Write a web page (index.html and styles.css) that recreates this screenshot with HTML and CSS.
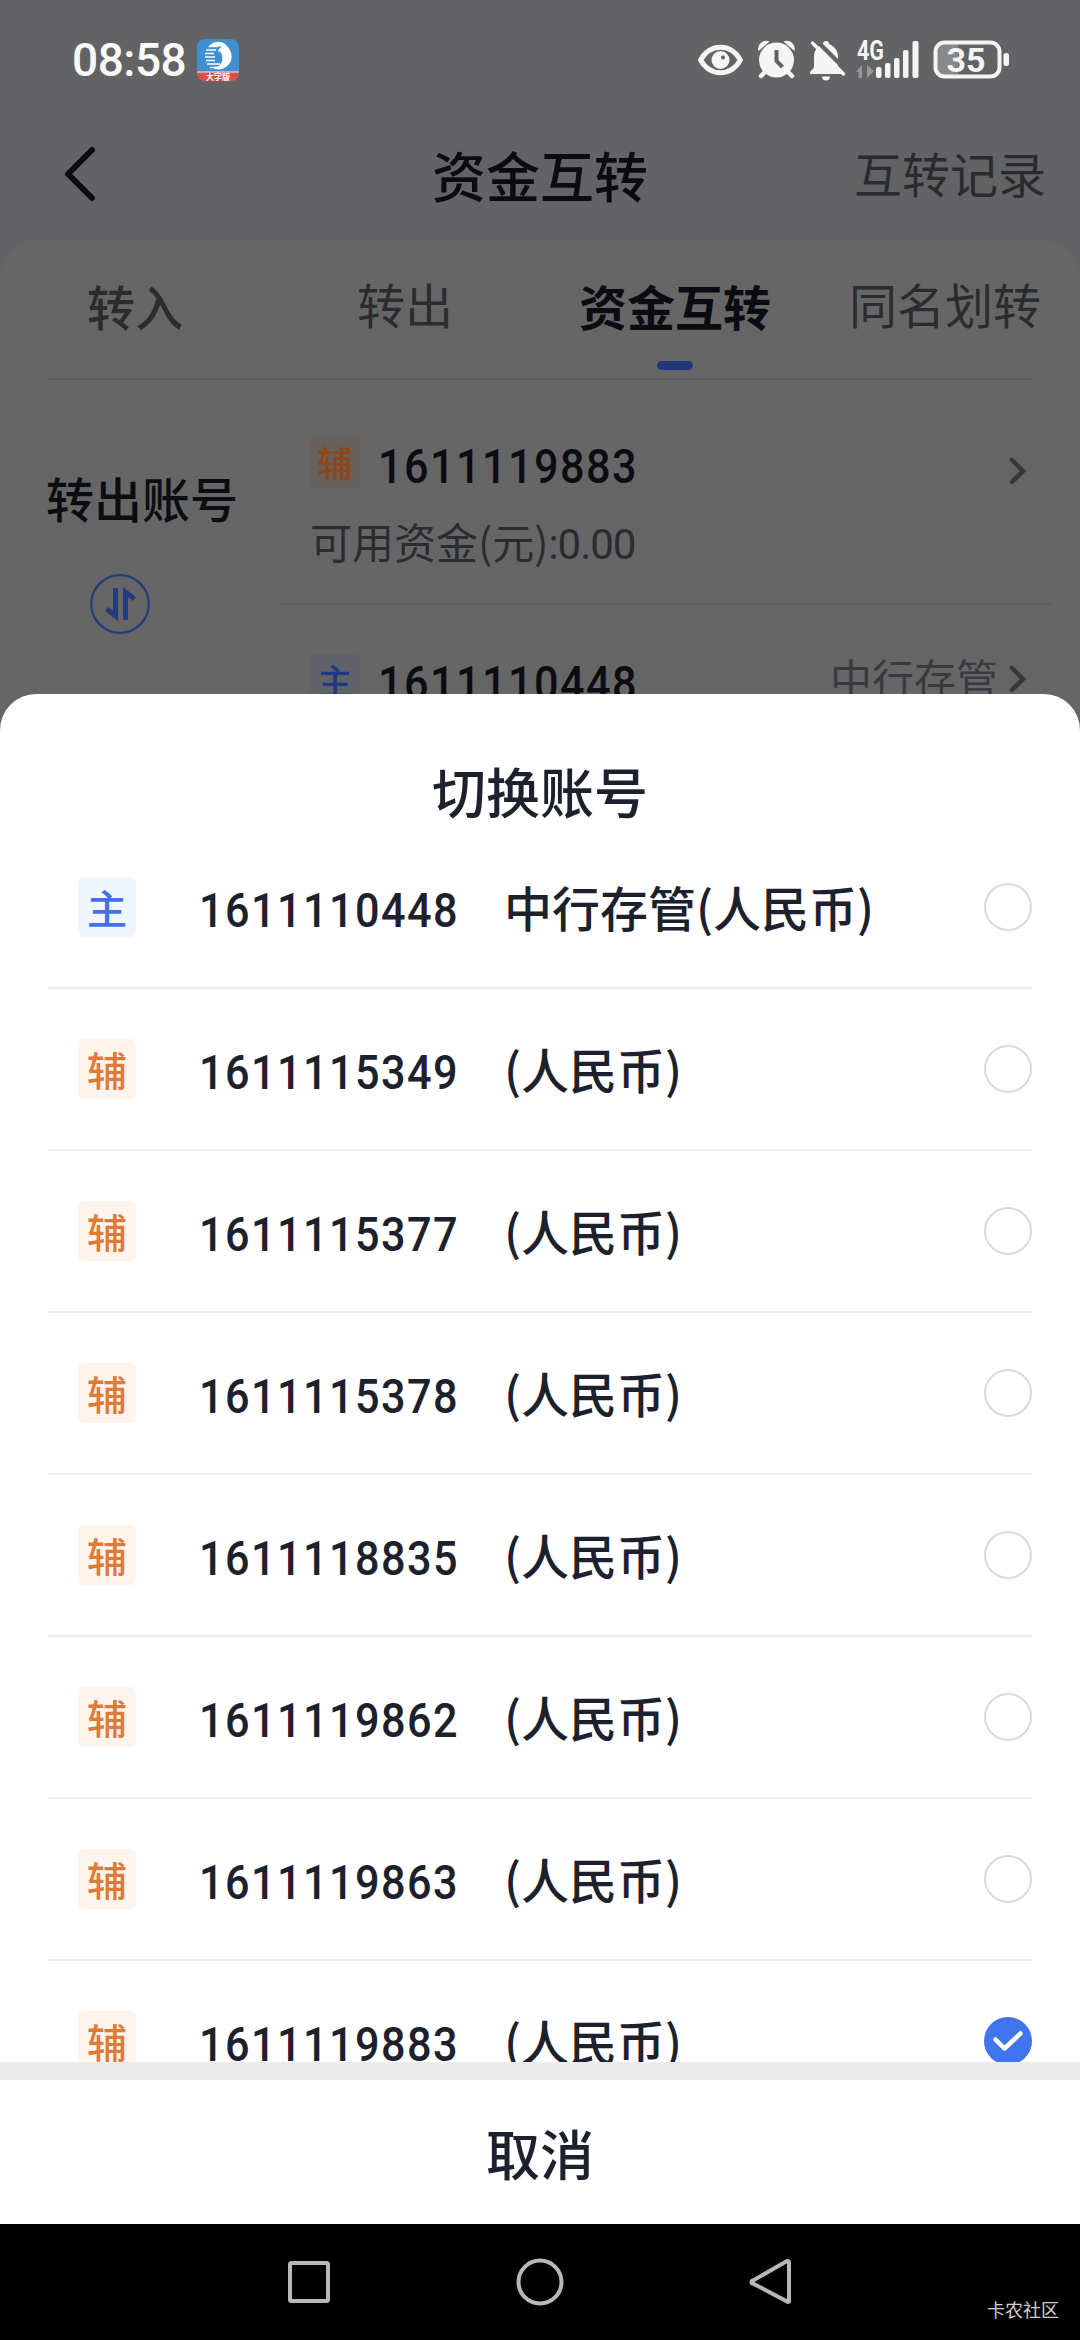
FILE: index.html
```html
<!DOCTYPE html>
<html lang="zh-CN">
<head>
<meta charset="utf-8">
<title>资金互转</title>
<link rel="stylesheet" href="styles.css">
</head>
<body>
<div class="screen">
  <div class="page">
    <div class="statusbar">
      <span class="clock">08:58</span>
      <svg class="app" width="42" height="42" viewBox="0 0 42 42">
        <defs><clipPath id="app-clip"><rect width="42" height="42" rx="8"/></clipPath></defs>
        <g clip-path="url(#app-clip)">
          <rect width="42" height="42" fill="#3f8fd2"/>
          <rect y="33" width="42" height="9" fill="#d9504a"/>
          <path d="M0 33h42" stroke="#e8eef5" stroke-width="1.200"/>
          <path d="M11 8C16 2 24 1 29 6c7 6 8 17 0 22-4 3-9 3-13 1 5-1 8-3 9-7 1-5 0-9-4-10 0 0 1-3 4-4-5-1-9 0-14 0z" fill="#fff"/>
          <path d="M12 7.500h9M9 11h10M8 14.500h9M8 18h10M9 21.500h9M10 25h13M13 28.500h10" stroke="#fff" stroke-width="1.400"/>
        </g>
        <text class="app-label" x="21" y="41" text-anchor="middle">大字版</text>
      </svg>
      <svg class="status-icons" width="316" height="44" viewBox="696 38 316 44" fill="#f5f5f5">
        <path d="M700.500 60c10-17 30-17 40 0c-10 17-30 17-40 0z" fill="none" stroke="#f5f5f5" stroke-width="5" stroke-linejoin="round"/>
        <circle cx="720.500" cy="60" r="9"/><circle cx="723" cy="57.500" r="2" fill="#636365"/>
        <circle cx="776.500" cy="60" r="17.500"/>
        <path d="M758.500 51a8 8 0 0 1 11-9.500zM794.500 51a8 8 0 0 0-11-9.500z"/>
        <path d="M766 71l-5 5M787 71l5 5" stroke="#f5f5f5" stroke-width="4.500" stroke-linecap="round"/>
        <path d="M776.500 50v11l6 6" fill="none" stroke="#636365" stroke-width="4"/>
        <path d="M810 74c0-5 4-4 4-8V57c0-8 5-12 9-13a3 3 0 0 1 6 0c5 2 9 6 9 13v9c0 4 4 3 4 8z"/>
        <path d="M822 76.500h8a4 4 0 0 1-8 0z"/>
        <path d="M815.500 39.500l32 32" stroke="#636365" stroke-width="4.500"/>
        <path d="M812.500 43l31 31" stroke="#f5f5f5" stroke-width="3.500" stroke-linecap="round"/>
        <text class="net" x="857" y="59.500" textLength="27" lengthAdjust="spacingAndGlyphs">4G</text>
        <path d="M862 65v13h-3.500v-6h-2.500zM867 65v13l7-7z" fill="#98989a"/>
        <rect x="876" y="67" width="5.500" height="11" rx="2"/>
        <rect x="885" y="63" width="5.500" height="15" rx="2"/>
        <rect x="894" y="58" width="5.500" height="20" rx="2"/>
        <rect x="903" y="50" width="5.500" height="28" rx="2"/>
        <rect x="912.500" y="41" width="6" height="37" rx="2"/>
        <path d="M946 43h12v34h-12a9 9 0 0 1-9-9V52a9 9 0 0 1 9-9z" fill="#88888a"/>
        <rect x="935.500" y="42.500" width="64" height="34" rx="9" fill="none" stroke="#f5f5f5" stroke-width="4"/>
        <rect x="1003.500" y="53" width="5.500" height="13" rx="2.500"/>
        <text class="pct" x="966" y="72" text-anchor="middle">35</text>
      </svg>
    </div>
    <div class="header">
      <svg class="back" width="36" height="60" viewBox="0 0 36 60"><path d="M32 6L8 30l24 24" fill="none" stroke="#0c0d10" stroke-width="6" stroke-linecap="round" stroke-linejoin="round"/></svg>
      <span class="title">资金互转</span>
      <span class="records">互转记录</span>
    </div>
    <div class="card">
      <div class="tabs">
        <span class="tab near">转入</span>
        <span class="tab">转出</span>
        <span class="tab active">资金互转</span>
        <span class="tab">同名划转</span>
      </div>
      <div class="transfer">
        <div class="side">
          <span class="side-label">转出账号</span>
          <svg class="swap" width="60" height="60" viewBox="0 0 60 60" fill="none" stroke="#233c7c">
            <circle cx="30" cy="30" r="28.800" stroke-width="2.200"/>
            <path d="M25.500 14v28l-9-7M35.500 46V18l9 7" stroke-width="5"/>
          </svg>
          <span class="side-label second">转入账号</span>
        </div>
        <div class="accounts">
          <div class="account out">
            <div class="line">
              <span class="mini aux">辅</span>
              <span class="num dim">1611119883</span>
              <svg class="chev low" width="20" height="32" viewBox="0 0 20 32"><path d="M4 5l11 11L4 27" fill="none" stroke="#36373b" stroke-width="4.500" stroke-linecap="round"/></svg>
            </div>
            <div class="funds">可用资金(元)<span class="amount">:0.00</span></div>
          </div>
          <div class="account in">
            <div class="line">
              <span class="mini main">主</span>
              <span class="num dim">1611110448</span>
              <span class="bank">中行存管</span>
              <svg class="chev" width="20" height="32" viewBox="0 0 20 32"><path d="M4 5l11 11L4 27" fill="none" stroke="#36373b" stroke-width="4.500" stroke-linecap="round"/></svg>
            </div>
          </div>
        </div>
      </div>
    </div>
  </div>

  <div class="sheet">
    <div class="sheet-title">切换账号</div>
    <div class="list">
      <div class="row"><span class="badge main">主</span><span class="num">1611110448</span><span class="name">中行存管(人民币)</span><i class="radio"></i></div>
      <div class="row"><span class="badge">辅</span><span class="num">1611115349</span><span class="name">(人民币)</span><i class="radio"></i></div>
      <div class="row"><span class="badge">辅</span><span class="num">1611115377</span><span class="name">(人民币)</span><i class="radio"></i></div>
      <div class="row"><span class="badge">辅</span><span class="num">1611115378</span><span class="name">(人民币)</span><i class="radio"></i></div>
      <div class="row"><span class="badge">辅</span><span class="num">1611118835</span><span class="name">(人民币)</span><i class="radio"></i></div>
      <div class="row"><span class="badge">辅</span><span class="num">1611119862</span><span class="name">(人民币)</span><i class="radio"></i></div>
      <div class="row"><span class="badge">辅</span><span class="num">1611119863</span><span class="name">(人民币)</span><i class="radio"></i></div>
      <div class="row"><span class="badge">辅</span><span class="num">1611119883</span><span class="name">(人民币)</span>
        <svg class="check" width="48" height="48" viewBox="0 0 48 48"><circle cx="24" cy="24" r="24" fill="#4174ef"/><path d="M11.500 22.500l9 9 16-15" fill="none" stroke="#fff" stroke-width="4.500" stroke-linecap="round" stroke-linejoin="round"/></svg>
      </div>
    </div>
    <div class="cancel">取消</div>
  </div>

  <div class="navbar">
    <svg width="48" height="48" viewBox="0 0 48 48"><rect x="5" y="5" width="38" height="38" rx="1.500"/></svg>
    <svg width="48" height="48" viewBox="0 0 48 48"><circle cx="24" cy="24" r="21.500"/></svg>
    <svg width="48" height="48" viewBox="0 0 48 48"><path d="M42 4.500v39a1.500 1.500 0 0 1-2 0L6 25.500a1.500 1.500 0 0 1 0-3L40 3a1.500 1.500 0 0 1 2 1.500z"/></svg>
    <span class="mark">卡农社区</span>
  </div>
</div>
</body>
</html>
```
FILE: styles.css
```css
* { box-sizing: border-box; }
body { margin: 0; font-family: "Noto Sans CJK SC", sans-serif; }

.screen {
  position: relative;
  display: flex;
  flex-direction: column;
  width: 1080px;
  height: 2340px;
  overflow: hidden;
  background: #636365;
}
svg { display: block; flex: none; overflow: visible; }

/* page behind the sheet */
.page { height: 694px; background: #636365; }
.statusbar {
  display: flex;
  align-items: center;
  height: 120px;
  padding: 0 68px 0 72px;
}
.clock {
  width: 125px;
  font: 500 46px/60px Roboto, sans-serif;
  letter-spacing: -0.5px;
  color: #fafafa;
}
.app-label { font: 700 8px "Noto Sans CJK SC", sans-serif; fill: #fff; }
.status-icons { margin-left: auto; }
.net { font: 700 27px Roboto, sans-serif; }
.pct { font: 700 34px Roboto, sans-serif; }

.header {
  display: grid;
  grid-template-columns: 1fr auto 1fr;
  align-items: center;
  height: 120px;
  padding: 0 34px 12px 34px;
}
.back { margin-left: 26px; }
.title { padding-top: 2px; font-size: 54px; line-height: 80px; font-weight: 500; color: #0b0c10; }
.records { justify-self: end; padding-bottom: 5px; font-size: 48px; line-height: 72px; color: #2a2b2f; }

.card {
  height: 500px;
  border-radius: 36px 36px 0 0;
  background: #666;
}
.tabs {
  position: relative;
  display: grid;
  grid-template-columns: repeat(4, 270px);
  height: 138px;
}
.tabs::after {
  content: "";
  position: absolute;
  left: 48px;
  right: 48px;
  bottom: -2px;
  height: 2px;
  background: #5e5e60;
}
.tab {
  position: relative;
  padding-top: 27px;
  text-align: center;
  font-size: 48px;
  line-height: 72px;
  color: #2b2c30;
}
.tab.near { font-weight: 500; padding-top: 29px; }
.tab.active { font-weight: 700; padding-top: 29px; color: #0b0c12; }
.tab.active::after {
  content: "";
  position: absolute;
  left: 117px;
  top: 121px;
  width: 36px;
  height: 9px;
  border-radius: 4.5px;
  background: #21377c;
}
.transfer { display: flex; height: 316px; }
.side { width: 282px; padding: 83px 0 0 46px; display: flex; flex-direction: column; }
.side-label { font-size: 48px; line-height: 72px; font-weight: 500; color: #0c0d12; }
.side-label.second { margin-top: 44px; }
.swap { margin: 41px 0 0 44px; }
.accounts { width: 770px; }
.account { padding: 0 24px 0 28px; }
.account.out { height: 227px; padding-top: 56px; border-bottom: 2px solid #5f5f61; }
.account.in { padding-top: 47px; }
.line { display: flex; align-items: center; height: 56px; }
.mini {
  width: 50px;
  height: 52px;
  border-radius: 5px;
  font-size: 35px;
  line-height: 52px;
  font-weight: 500;
  text-align: center;
}
.mini.aux { background: #67605c; color: #914618; }
.mini.main { background: #5f6269; color: #203a82; }
.num {
  font: 500 48px/60px Roboto, sans-serif;
  letter-spacing: 1.6px;
  color: #1c212d;
  transform: scaleX(0.9);
  transform-origin: left;
}
.num.dim { margin-left: 18px; padding-top: 10px; color: #0c0d12; }
.account.in .num { padding-top: 8px; }
.line .chev { margin-left: auto; }
.line .chev.low { margin-top: 17px; }
.account.in .chev { margin-top: -3px; }
.bank { margin: -7px 0 0 auto; font-size: 42px; line-height: 60px; color: #393a40; }
.line .bank + .chev { margin-left: 10px; }
.funds {
  margin-top: 21px;
  font-size: 42px;
  line-height: 60px;
  color: #2b2c30;
}
.amount { font-family: Roboto, sans-serif; letter-spacing: -1px; }

/* account picker */
.sheet {
  position: relative;
  height: 1530px;
  border-radius: 36px 36px 0 0;
  background: #fff;
}
.sheet-title {
  height: 133px;
  padding-top: 57px;
  text-align: center;
  font-size: 54px;
  line-height: 80px;
  font-weight: 500;
  color: #1c212d;
}
.list { height: 1235px; overflow: hidden; }
.row {
  display: flex;
  align-items: center;
  height: 162px;
  margin: 0 48px;
  padding-left: 30px;
  border-bottom: 2px solid #ededed;
}
.badge {
  width: 58px;
  height: 60px;
  border-radius: 6px;
  background: #fdf4ee;
  color: #e07a38;
  font-size: 40px;
  line-height: 60px;
  font-weight: 500;
  text-align: center;
}
.badge.main { background: #f0f5fe; color: #4571e0; }
.row .num { width: 306px; margin-left: 63px; margin-right: -1px; padding-top: 7px; }
.name { padding-bottom: 2px; font-size: 48px; line-height: 72px; font-weight: 500; color: #1c212d; }
.radio, .check { width: 48px; height: 48px; margin-left: auto; }
.radio { border: 2px solid #dadada; border-radius: 50%; }
.cancel {
  height: 162px;
  border-top: 18px solid #ebebeb;
  padding-top: 33px;
  text-align: center;
  font-size: 54px;
  line-height: 80px;
  font-weight: 500;
  color: #1c212d;
}

.navbar {
  position: relative;
  display: flex;
  align-items: center;
  height: 116px;
  padding: 0 0 0 285px;
  gap: 183px;
  background: #000;
}
.navbar svg { fill: none; stroke: #b8b8b8; stroke-width: 4; }
.mark {
  position: absolute;
  right: 21px;
  bottom: 17px;
  font-size: 18px;
  line-height: 28px;
  color: #d0d0d0;
}
```
